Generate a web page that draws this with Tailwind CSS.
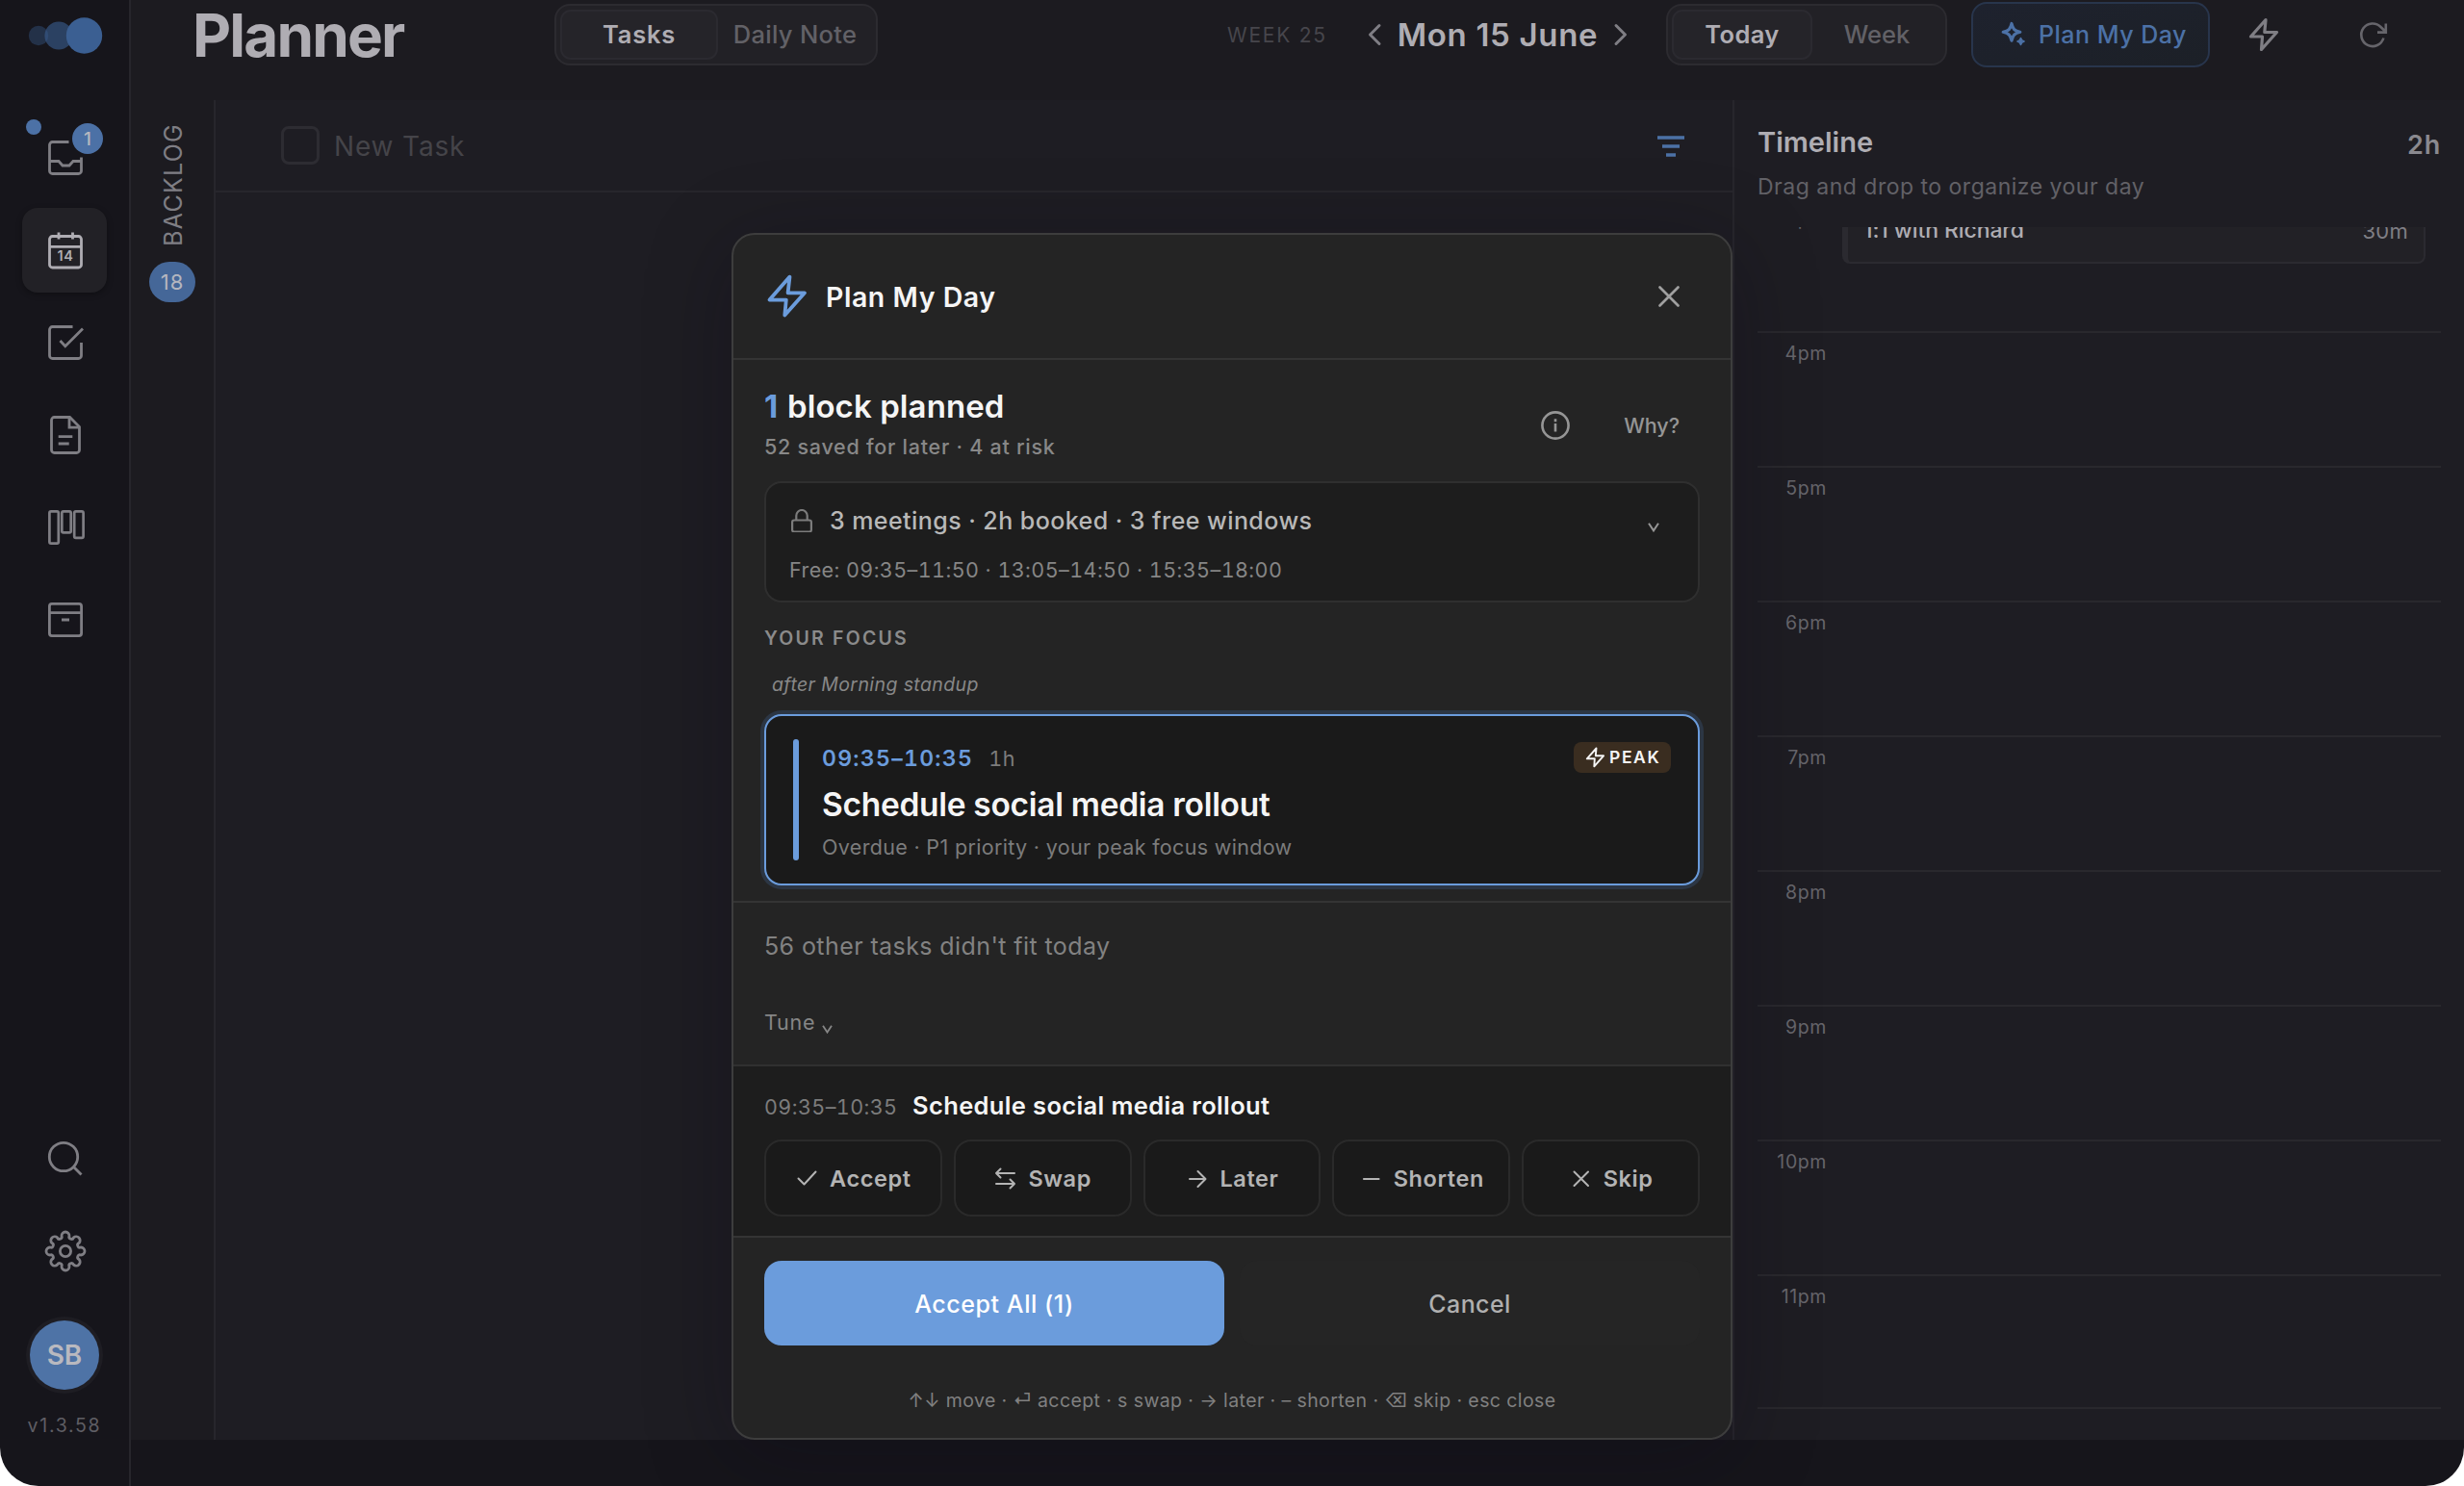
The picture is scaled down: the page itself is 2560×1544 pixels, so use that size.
<!DOCTYPE html>
<html lang="en">
<head>
    <meta charset="utf-8">
    <title>Planner</title>
    <script src="https://cdn.jsdelivr.net/npm/@tailwindcss/browser@4"></script>
</head>
<body class="bg-white font-['Inter',sans-serif]">
<div class="relative flex w-[2560px] h-[1544px] overflow-hidden rounded-b-[40px] bg-[#16151b] text-[#afadb3]">

    <!-- Sidebar -->
    <aside class="flex flex-col items-center shrink-0 w-[136px] border-r-2 border-[#27262c] text-[#7f7e84]">
        <svg class="w-[134px] h-[74px]" viewBox="0 0 134 74" fill="#3b5f92">
            <circle cx="40" cy="37" r="10.2" opacity=".38" />
            <circle cx="61" cy="37" r="14.6" opacity=".6" />
            <circle cx="87.5" cy="37" r="18.7" />
        </svg>
        <nav class="flex flex-col gap-2 mt-[46px]">
            <a class="relative flex items-center justify-center size-[88px]">
                <svg class="size-10" viewBox="0 0 40 40" fill="none" stroke="currentColor" stroke-width="2.8">
                    <path d="M24.5 3.5H7.5a3 3 0 0 0-3 3v27a3 3 0 0 0 3 3h27a3 3 0 0 0 3-3V19.5" />
                    <path d="M4.5 23.5H14l4 4.5h7l4-4.5h8.5" />
                </svg>
                <span class="absolute left-1 top-1 size-4 rounded-full bg-[#4c71a6]"></span>
                <span class="absolute left-[52px] top-2 flex items-center justify-center size-8 pt-0.5 rounded-full bg-[#4c71a6] text-[19px] font-medium text-[#b7b8bf]">1</span>
            </a>
            <a class="flex items-center justify-center size-[88px] rounded-2xl bg-[#222126] shadow-[0_2px_6px_rgba(0,0,0,0.3)] text-[#afadb3]">
                <svg class="size-10" viewBox="0 0 40 40" fill="none" stroke="currentColor" stroke-width="2.8">
                    <rect x="4.5" y="5.5" width="33" height="32.5" rx="3" />
                    <path d="M4.5 16.3h33M14 1.5v7M28.5 1.5v7" />
                    <text x="21" y="30.9" text-anchor="middle" font-size="14.5" font-weight="600" letter-spacing="0.6" fill="currentColor" stroke="none">14</text>
                </svg>
            </a>
            <a class="flex items-center justify-center size-[88px]">
                <svg class="size-10" viewBox="0 0 40 40" fill="none" stroke="currentColor" stroke-width="2.8">
                    <path d="M28.5 3.5h-21a3 3 0 0 0-3 3v27a3 3 0 0 0 3 3h27a3 3 0 0 0 3-3V20" />
                    <path d="m15.5 18 5.3 5.8L39 5.5" />
                </svg>
            </a>
            <a class="flex items-center justify-center size-[88px]">
                <svg class="size-10" viewBox="0 0 40 40" fill="none" stroke="currentColor" stroke-width="2.8">
                    <path d="M25.5 1.5h-16a3 3 0 0 0-3 3v31a3 3 0 0 0 3 3h23a3 3 0 0 0 3-3V11.5l-10-10Z" />
                    <path d="M25 1.5v10.7h10.5M13.7 21.7h14.6M13.7 29h11" />
                </svg>
            </a>
            <a class="flex items-center justify-center size-[88px]">
                <svg class="size-10 overflow-visible" viewBox="0 0 40 40" fill="none" stroke="currentColor" stroke-width="2.7">
                    <rect x="4.4" y="3.4" width="9.4" height="33.2" rx="1.6" />
                    <rect x="17.3" y="3.4" width="9.4" height="22" rx="1.6" />
                    <rect x="30.2" y="3.4" width="9.4" height="27.5" rx="1.6" />
                </svg>
            </a>
            <a class="flex items-center justify-center size-[88px]">
                <svg class="size-10" viewBox="0 0 40 40" fill="none" stroke="currentColor" stroke-width="2.8">
                    <rect x="4.4" y="3.4" width="33.2" height="33.2" rx="2.5" />
                    <path d="M4.4 12.7h33.2M17 20h8" />
                </svg>
            </a>
        </nav>
        <nav class="flex flex-col gap-2 mt-auto">
            <a class="flex items-center justify-center size-[88px]">
                <svg class="size-10" viewBox="0 0 40 40" fill="none" stroke="currentColor" stroke-width="2.8">
                    <circle cx="19" cy="18" r="14.7" />
                    <path d="m29.5 28.5 8 8" />
                </svg>
            </a>
            <a class="flex items-center justify-center size-[88px]">
                <svg class="w-[46px] h-11" viewBox="-24 -22 46 44" fill="none" stroke="currentColor" stroke-width="2.8">
                    <path d="M-4-16A4 4 0 0 1 4-16A2.43 2.43 0 0 0 8.49-14.14A4 4 0 0 1 14.14-8.49A2.43 2.43 0 0 0 16-4A4 4 0 0 1 16 4A2.43 2.43 0 0 0 14.14 8.49A4 4 0 0 1 8.49 14.14A2.43 2.43 0 0 0 4 16A4 4 0 0 1-4 16A2.43 2.43 0 0 0-8.49 14.14A4 4 0 0 1-14.14 8.49A2.43 2.43 0 0 0-16 4A4 4 0 0 1-16-4A2.43 2.43 0 0 0-14.14-8.49A4 4 0 0 1-8.49-14.14A2.43 2.43 0 0 0-4-16Z" />
                    <circle r="5.6" />
                </svg>
            </a>
        </nav>
        <div class="flex items-center justify-center size-[72px] mt-7 rounded-full bg-[#4e73a6] shadow-[0_0_0_4px_#1e1d23] text-[28px] font-semibold text-[#b9b9bf]">SB</div>
        <div class="flex items-center h-7 mt-[24px] mb-12 text-[19.5px] tracking-[1.7px] text-[#5f5e64]">v1.3.58</div>
    </aside>

    <div class="flex flex-col flex-1 min-w-0 mb-12 bg-[#1c1b20]">
        <!-- Top bar -->
        <header class="flex items-center h-[104px] pb-8 pl-16">
            <h1 class="w-[376px] pt-0.5 text-[62px] font-bold leading-none tracking-[-1.85px]">Planner</h1>
            <div class="flex w-[336px] h-16 p-1 rounded-[16px] border-2 border-[#2c2b30] bg-[#222126] text-[25.5px]">
                <button class="w-[164px] pt-px rounded-[11px] border-2 border-[#2b2a30] bg-[#252429] font-semibold tracking-[0.8px]">Tasks</button>
                <button class="flex-1 pt-px font-medium tracking-[0.3px] text-[#626167]">Daily Note</button>
            </div>
            <div class="w-[144px] ml-[363px] pt-0.5 text-[21px] tracking-[1.76px] text-[#47464c]">WEEK 25</div>
            <svg class="w-[18px] h-6 text-[#7f7e84]" viewBox="0 0 18 24" fill="none" stroke="currentColor" stroke-width="3" stroke-linecap="round" stroke-linejoin="round">
                <path d="M14 2.5 4.5 12 14 21.5" />
            </svg>
            <div class="w-[238px] pt-0.5 text-center text-[33px] font-semibold tracking-[0.68px]">Mon 15 June</div>
            <svg class="w-[18px] h-6 text-[#7f7e84]" viewBox="0 0 18 24" fill="none" stroke="currentColor" stroke-width="3" stroke-linecap="round" stroke-linejoin="round">
                <path d="M4 2.5 13.5 12 4 21.5" />
            </svg>
            <div class="flex w-[292px] h-16 ml-[38px] p-1 rounded-[16px] border-2 border-[#2c2b30] bg-[#222126] text-[25.5px]">
                <button class="w-[146px] pt-px rounded-[11px] border-2 border-[#2b2a30] bg-[#252429] font-semibold tracking-[0.4px]">Today</button>
                <button class="flex-1 pt-px font-medium text-[#626167]">Week</button>
            </div>
            <button class="flex items-center w-[248px] h-[68px] ml-[25px] pl-[26px] rounded-[16px] border-2 border-[#28354c] bg-linear-to-br from-[#1e222e] to-[#1c2027] text-[#4c71a6] text-[25px] font-medium tracking-[0.5px]">
                <svg class="w-8 h-7 mr-2.5" viewBox="0 0 32 28" fill="none" stroke="currentColor" stroke-width="3.2" stroke-linejoin="round">
                    <path d="M14 2.5c1.3 5.6 3 7.5 8.8 8.8-5.8 1.3-7.5 3.2-8.8 8.8-1.3-5.6-3-7.5-8.8-8.8 5.8-1.3 7.5-3.2 8.8-8.8Z" />
                    <path d="M23.5 17.4c.6 2.2 1.400 3 3.600 3.600-2.200.6-3 1.400-3.600 3.600-.6-2.200-1.400-3-3.600-3.600 2.200-.6 3-1.400 3.600-3.600Z" fill="currentColor" stroke-width="1.5" />
                </svg>
                <span class="pt-0.5">Plan My Day</span>
            </button>
            <svg class="w-8 h-9 ml-10 text-[#7f7e84]" viewBox="0 0 32 36" fill="none" stroke="currentColor" stroke-width="3.2" stroke-linejoin="round">
                <path d="M18 2.5 2.5 20h12l-1 13.500 16-18H16.800Z" />
            </svg>
            <svg class="w-8 h-8 ml-[82px] text-[#66656b]" viewBox="0 0 32 32" fill="none" stroke="currentColor" stroke-width="2.6">
                <path d="M26.400 19.500A11.800 11.800 0 1 1 23.500 8L28.700 13M28.800 4.500V13.600H20" />
            </svg>
        </header>

        <div class="flex flex-1 min-h-0">
            <!-- Collapsed backlog -->
            <div class="flex flex-col items-center w-[88px] pt-6 border-r-2 border-[#27262c]">
                <span class="ml-0.5 rotate-180 [writing-mode:vertical-rl] text-[25px] leading-7 tracking-[1.27px] text-[#7f7e84]">BACKLOG</span>
                <span class="flex items-center justify-center w-12 h-[42px] mt-4 pt-0.5 rounded-full bg-[#456798] text-[22px] tracking-[1px] text-[#b4b6bf]">18</span>
            </div>

            <!-- Tasks -->
            <main class="flex-1 bg-[#1e1d23]">
                <div class="flex items-center h-24 pl-[68px] pr-[50px] border-b-2 border-[#27262c]">
                    <span class="size-10 rounded-lg border-3 border-[#2d2c32]"></span>
                    <span class="ml-[15px] pt-0.5 text-[28px] tracking-[0.83px] text-[#454449]">New Task</span>
                    <svg class="w-7 h-6 ml-auto text-[#4c71a6]" viewBox="0 0 28 24" fill="none" stroke="currentColor" stroke-width="3.4">
                        <path d="M0 4h28M5 13h18M9 22h10" />
                    </svg>
                </div>
            </main>

            <!-- Timeline -->
            <section class="flex flex-col w-[760px] px-6 border-l-2 border-[#27262c] bg-[#1e1d23]">
                <div class="h-[132px] pt-[25px]">
                    <div class="flex items-center justify-between h-10">
                        <h2 class="pb-0.5 text-[29px] font-semibold">Timeline</h2>
                        <span class="pt-1 text-[27px] font-semibold tracking-[0.78px] text-[#8a898f]">2h</span>
                    </div>
                    <p class="mt-2.5 text-[23px] leading-[30px] tracking-[0.5px] text-[#626167]">Drag and drop to organize your day</p>
                </div>
                <div class="relative flex-1 min-h-0 overflow-hidden text-[19.5px] leading-7 tracking-[0.6px] text-[#66656b]">
                    <div class="-mt-8 h-[140px] pt-[7px] border-t-2 border-[#29282d]"><div class="w-[72px] text-right">3pm</div></div>
                    <div class="h-[140px] pt-[7px] border-t-2 border-[#29282d]"><div class="w-[72px] text-right">4pm</div></div>
                    <div class="h-[140px] pt-[7px] border-t-2 border-[#29282d]"><div class="w-[72px] text-right">5pm</div></div>
                    <div class="h-[140px] pt-[7px] border-t-2 border-[#29282d]"><div class="w-[72px] text-right">6pm</div></div>
                    <div class="h-[140px] pt-[7px] border-t-2 border-[#29282d]"><div class="w-[72px] text-right">7pm</div></div>
                    <div class="h-[140px] pt-[7px] border-t-2 border-[#29282d]"><div class="w-[72px] text-right">8pm</div></div>
                    <div class="h-[140px] pt-[7px] border-t-2 border-[#29282d]"><div class="w-[72px] text-right">9pm</div></div>
                    <div class="h-[140px] pt-[7px] border-t-2 border-[#29282d]"><div class="w-[72px] text-right">10pm</div></div>
                    <div class="h-[140px] pt-[7px] border-y-2 border-[#29282d]"><div class="w-[72px] text-right">11pm</div></div>
                    <!-- Scrolled event -->
                    <div class="absolute left-[88px] right-4 -top-8 flex items-center justify-between h-[70px] px-4 rounded-lg border-2 border-l-6 border-[#2b2a30] bg-[#222126]">
                        <span class="text-[23px] font-medium tracking-[-0.1px] text-[#afadb3]">1:1 with Richard</span>
                        <span class="pt-0.5 text-[22px] tracking-[0.27px] text-[#7f7e84]">30m</span>
                    </div>
                </div>
            </section>
        </div>
    </div>

    <!-- Plan My Day dialog -->
    <div class="absolute left-[760px] top-[242px] flex flex-col w-[1040px] h-[1254px] overflow-hidden rounded-3xl border-2 border-[#3d3d3d] bg-[#242424] shadow-[0_16px_90px_rgba(10,8,20,0.28)]">
        <div class="flex items-center h-[130px] pl-8 pr-[52px] border-b-2 border-[#343434]">
            <svg class="w-12 h-12 text-[#6b9cdc]" viewBox="0 0 48 48" fill="none" stroke="currentColor" stroke-width="3.8" stroke-linejoin="round">
                <path d="m26.500 3.600-21 24h17.300l-1.500 15.900L42 20.300H24.600Z" />
            </svg>
            <h2 class="ml-4 pt-[3px] text-[28.5px] font-semibold tracking-[0.55px] text-[#f5f5f5]">Plan My Day</h2>
            <svg class="size-6 ml-auto text-[#a0a0a0]" viewBox="0 0 24 24" fill="none" stroke="currentColor" stroke-width="2.7" stroke-linecap="round">
                <path d="m2.500 2.500 19 19m0-19-19 19" />
            </svg>
        </div>

        <div class="px-8 pt-6 pb-4 border-b-2 border-[#343434]">
            <div class="flex items-center h-[87px] pr-[21px]">
                <div>
                    <div class="flex items-center h-[46px] pt-0.5 text-[33px] font-semibold tracking-[0.09px] text-[#f5f5f5]"><span class="w-6 font-bold text-[#6b9cdc]">1</span>block planned</div>
                    <div class="flex items-center h-[39px] text-[21.5px] font-medium tracking-[0.74px] text-[#888]">52 saved for later · 4 at risk</div>
                </div>
                <svg class="size-8 ml-auto text-[#959595]" viewBox="0 0 32 32" fill="none" stroke="currentColor" stroke-width="2.6">
                    <circle cx="16" cy="16" r="13.6" />
                    <path d="M16 14v8.5M16 9.3v3" />
                </svg>
                <span class="ml-[55px] pt-0.5 text-[21.5px] font-medium text-[#959595]">Why?</span>
            </div>

            <div class="h-[126px] mt-[15px] pl-6 pr-10 pt-[17px] rounded-[18px] border-2 border-[#2f2f2f] bg-[#1d1d1d]">
                <div class="flex items-center h-[44px]">
                    <svg class="w-6 h-6 text-[#7c7c7c]" viewBox="0 0 24 24" fill="none" stroke="currentColor" stroke-width="2.2">
                        <rect x="3.1" y="11.5" width="19.8" height="12" rx="2" />
                        <path d="M7.300 11.500V6.700a5.700 5.700 0 0 1 11.400 0v4.800" />
                    </svg>
                    <span class="ml-[18px] pt-0.5 text-[25px] font-medium tracking-[0.44px] text-[#b8b8b8]">3 meetings · 2h booked · 3 free windows</span>
                    <svg class="w-3 h-2.5 mt-[13px] ml-auto text-[#959595]" viewBox="0 0 12 10" fill="none" stroke="currentColor" stroke-width="2">
                        <path d="m1 .8 5 7.600L11 .8" />
                    </svg>
                </div>
                <div class="flex items-center h-[30px] mt-[14px] text-[21.5px] tabular-nums tracking-[0.42px] text-[#868686]">Free: 09:35–11:50 · 13:05–14:50 · 15:35–18:00</div>
            </div>

            <div class="flex items-center h-[30px] mt-[22px] pt-0.5 text-[19.5px] font-semibold tracking-[2.19px] text-[#8b8b8b]">YOUR FOCUS</div>
            <div class="flex items-center h-[30px] mt-[18px] pt-0.5 pl-2 text-[19.5px] italic tracking-[0.4px] text-[#888]">after Morning standup</div>

            <div class="flex gap-6 h-[178px] mt-4 px-7 py-6 rounded-[18px] border-2 border-[#6b9cdc] bg-[#1a1a1a] shadow-[0_0_0_4px_#2c3644]">
                <span class="w-1.5 rounded-full bg-[#6b9cdc]"></span>
                <div class="flex-1">
                    <div class="flex items-center h-[38px]">
                        <span class="pt-0.5 text-[23px] font-semibold tabular-nums tracking-[1.3px] text-[#6b9cdc]">09:35–10:35</span>
                        <span class="ml-4 pt-0.5 text-[21.5px] tabular-nums tracking-[0.7px] text-[#7c7c7c]">1h</span>
                        <span class="flex items-center h-8 ml-auto w-[101px] pl-3 rounded-lg bg-[#3a2d20] text-[17.5px] font-semibold tracking-[1.59px] text-[#f5f5f5]">
                            <svg class="w-5 h-[22px] mr-[5px]" viewBox="0 0 20 22" fill="none" stroke="currentColor" stroke-width="1.9" stroke-linejoin="round">
                                <path d="M11.500 1.500 1.800 12.300h8l-.5 8L19 9.300h-8.200Z" />
                            </svg>
                            PEAK
                        </span>
                    </div>
                    <div class="flex items-center h-[52px] mt-1 text-[33.5px] font-semibold tracking-[-0.3px] text-[#f5f5f5]">Schedule social media rollout</div>
                    <div class="flex items-center h-[30px] mt-[3px] text-[21.5px] tracking-[0.33px] text-[#7c7c7c]">Overdue · P1 priority · your peak focus window</div>
                </div>
            </div>
        </div>

        <div class="h-[170px] px-8 pt-6 border-b-2 border-[#303030]">
            <div class="flex items-center h-10 pt-[3px] text-[25px] tracking-[0.41px] text-[#828282]">56 other tasks didn't fit today</div>
            <div class="flex items-center h-8 mt-11 text-[21.5px] tracking-[0.76px] text-[#868686]">Tune
                <svg class="w-[11px] h-[9px] mt-3.5 ml-[7px]" viewBox="0 0 11 9" fill="none" stroke="currentColor" stroke-width="1.8">
                    <path d="m1 .8 4.500 6.800L10 .8" />
                </svg>
            </div>
        </div>

        <div class="h-[178px] px-8 pt-[21px] border-b-2 border-[#343434] bg-[#1d1d1d]">
            <div class="flex items-center h-10">
                <span class="w-[154px] pt-[3px] text-[21.5px] tabular-nums tracking-[0.42px] text-[#7c7c7c]">09:35–10:35</span>
                <span class="text-[25.5px] font-semibold tracking-[0.36px] text-[#f5f5f5]">Schedule social media rollout</span>
            </div>
            <div class="grid grid-cols-5 gap-3 h-20 mt-[15px] text-[23.5px] font-semibold tracking-[0.6px] text-[#b4b4b4]">
                <button class="flex items-center justify-center gap-3 rounded-[18px] border-2 border-[#2a2a2a] bg-[#1a1a1a]">
                    <svg class="size-6" viewBox="0 0 24 24" fill="none" stroke="currentColor" stroke-width="2" stroke-linecap="round" stroke-linejoin="round"><path d="m3.500 12.500 6 6 12-13" /></svg>
                    <span class="pt-0.5">Accept</span>
                </button>
                <button class="flex items-center justify-center gap-3 rounded-[18px] border-2 border-[#2a2a2a] bg-[#1a1a1a]">
                    <svg class="size-6" viewBox="0 0 24 24" fill="none" stroke="currentColor" stroke-width="2" stroke-linecap="round" stroke-linejoin="round"><path d="M22 7H3M7.500 2.500 3 7l4.500 4.500M3 18h19M17.500 13.500 22 18l-4.500 4.500" /></svg>
                    <span class="pt-0.5">Swap</span>
                </button>
                <button class="flex items-center justify-center gap-3 rounded-[18px] border-2 border-[#2a2a2a] bg-[#1a1a1a]">
                    <svg class="size-6" viewBox="0 0 24 24" fill="none" stroke="currentColor" stroke-width="2" stroke-linecap="round" stroke-linejoin="round"><path d="M5 13h16M13.500 5l8 8-8 8" /></svg>
                    <span class="pt-0.5">Later</span>
                </button>
                <button class="flex items-center justify-center gap-3 rounded-[18px] border-2 border-[#2a2a2a] bg-[#1a1a1a]">
                    <svg class="size-6" viewBox="0 0 24 24" fill="none" stroke="currentColor" stroke-width="2.200" stroke-linecap="round"><path d="M5 13h15.500" /></svg>
                    <span class="pt-0.5">Shorten</span>
                </button>
                <button class="flex items-center justify-center gap-3 rounded-[18px] border-2 border-[#2a2a2a] bg-[#1a1a1a]">
                    <svg class="size-6" viewBox="0 0 24 24" fill="none" stroke="currentColor" stroke-width="2" stroke-linecap="round"><path d="m5.500 5.500 14.500 14.500m0-14.500-14.500 14.500" /></svg>
                    <span class="pt-0.5">Skip</span>
                </button>
            </div>
        </div>

        <div class="px-8 pt-6">
            <div class="grid grid-cols-2 gap-4 h-[88px] text-[25px] font-medium">
                <button class="pt-[3px] rounded-[18px] bg-[#6b9cdc] tracking-[0.56px] text-white">Accept All (1)</button>
                <button class="pt-[3px] rounded-[18px] bg-[#252525] tracking-[0.38px] text-[#b0b0b0]">Cancel</button>
            </div>
            <div class="flex items-center justify-center h-[30px] mt-[43px] text-[19.5px] tracking-[0.4px] text-[#808080]">↑↓ move · ⏎ accept · s swap · → later · – shorten · ⌫ skip · esc close</div>
        </div>
    </div>
</div>
</body>
</html>
